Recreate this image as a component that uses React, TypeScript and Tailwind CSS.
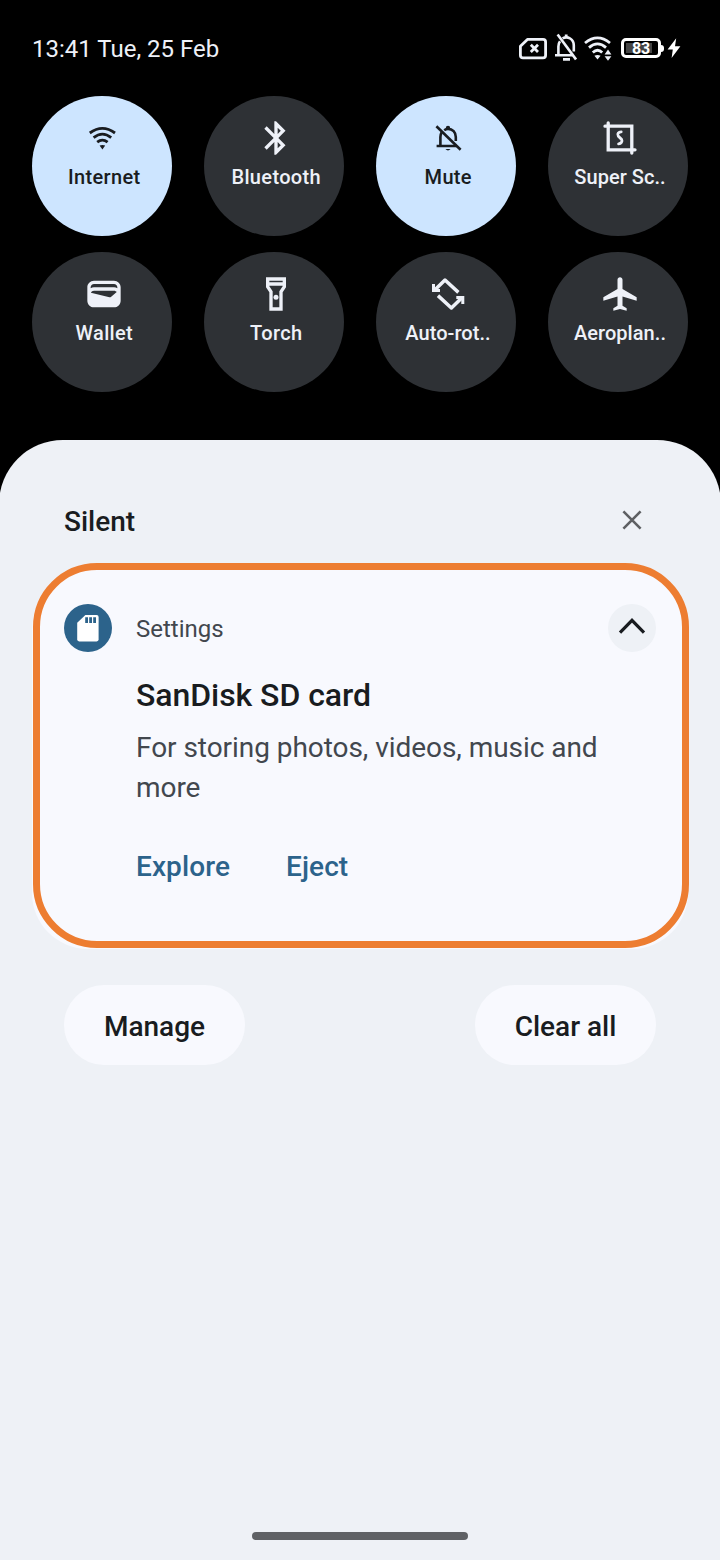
import type { ReactNode } from 'react';
import clsx from 'clsx';

const Glyph = ({ children }: { children: ReactNode }) => (
    <svg width="40" height="40" viewBox="0 0 24 24" fill="currentColor">
        {children}
    </svg>
);

const WifiIcon = () => (
    <svg width="40" height="40" viewBox="0 0 40 40" fill="none" stroke="currentColor" strokeWidth="2.8">
        <path d="M5.8 15Q18.4 5.8 31 15" />
        <path d="M9.6 19.6Q18.4 12.6 27.2 19.6" />
        <path d="M13.2 24.2Q18.4 20 23.6 24.2" />
        <path d="M15.6 27.6Q18.4 26.2 21.2 27.6L18.4 31.4Z" fill="currentColor" stroke="none" />
    </svg>
);

const MuteIcon = () => (
    <svg width="40" height="40" viewBox="0 0 40 40" fill="none" stroke="currentColor" strokeWidth="2.6">
        <path d="M8.4 8.2L32.6 31.8" />
        <path d="M12.4 28V19Q12.4 16.6 13.6 14.4M8.6 28H28.8" />
        <path d="M16.2 12.2Q18 10.9 20 10.9C24.6 10.9 27.8 14.4 27.8 19V23" />
        <path d="M17.8 10A2.2 2.2 0 0 1 22.2 10ZM17.4 31H22.6Q20 33.8 17.4 31Z" fill="currentColor" stroke="none" />
    </svg>
);

const ScreenshotIcon = () => (
    <svg width="40" height="40" viewBox="0 0 40 40" fill="none" stroke="currentColor" strokeWidth="3.3" strokeLinecap="round">
        <path d="M8.2 5V31.8H35M5 8.2H31.8V35" />
        <path d="M21.2 13.8C18.6 14 16.8 16 18.2 18L21.6 21.4C22.8 23.6 21 25.6 18.6 25.8" strokeWidth="2.8" />
    </svg>
);

const RotateIcon = () => (
    <svg width="40" height="40" viewBox="0 0 40 40" fill="none" stroke="currentColor" strokeWidth="3.5">
        <path d="M30.4 18.4L17 6L7 15.8M10 21.6L23.4 34L33.4 24.2" strokeLinejoin="round" />
        <path d="M4 10H7V15H12V18H4ZM36.3 30H33.3V25H28.3V22H36.3Z" fill="currentColor" stroke="none" />
    </svg>
);

const tiles: { label: string; active?: boolean; icon: ReactNode }[] = [
    { label: 'Internet', active: true, icon: <WifiIcon /> },
    {
        label: 'Bluetooth',
        icon: (
            <Glyph>
                <path d="M17.71 7.71L12 2h-1v7.59L6.41 5 5 6.41 10.59 12 5 17.59 6.41 19 11 14.41V22h1l5.71-5.71-4.3-4.29 4.3-4.29zM13 5.83l1.88 1.88L13 9.59V5.83zm1.88 10.46L13 18.17v-3.76l1.88 1.88z" />
            </Glyph>
        ),
    },
    { label: 'Mute', active: true, icon: <MuteIcon /> },
    { label: 'Super Sc..', icon: <ScreenshotIcon /> },
    {
        label: 'Wallet',
        icon: (
            <Glyph>
                <path d="M18 4H6C3.79 4 2 5.79 2 8v8c0 2.21 1.79 4 4 4h12c2.21 0 4-1.79 4-4V8c0-2.21-1.79-4-4-4zm-1.86 9.77c-.24.2-.57.28-.88.2L4.15 11.25C4.45 10.52 5.16 10 6 10h12c.67 0 1.26.34 1.63.84l-3.49 2.93zM6 6h12c1.1 0 2 .9 2 2v.55c-.59-.34-1.27-.55-2-.55H6c-.73 0-1.41.21-2 .55V8c0-1.1.9-2 2-2z" />
            </Glyph>
        ),
    },
    {
        label: 'Torch',
        icon: (
            <Glyph>
                <path d="M6 2v6l2 3v11h8V11l2-3V2H6zm10 2v1H8V4h8zm-2 6.4V20h-4v-9.61l-2-3V7h8v.39l-2 3.01z" />
                <circle cx="12" cy="14" r="1.5" />
            </Glyph>
        ),
    },
    { label: 'Auto-rot..', icon: <RotateIcon /> },
    {
        label: 'Aeroplan..',
        icon: (
            <Glyph>
                <path d="M22 16v-2l-8.5-5V3.5c0-.83-.67-1.5-1.5-1.5s-1.5.67-1.5 1.5V9L2 14v2l8.5-2.5V19L8 20.5V22l4-1 4 1v-1.5L13.5 19v-5.5L22 16z" />
            </Glyph>
        ),
    },
];

const StatusBar = () => (
    <div className="flex h-24 items-center justify-between pl-8 pr-[39px] text-[#eef1f8]">
        <span className="pt-0.5 text-2xl leading-8">13:41 Tue, 25 Feb</span>
        <div className="flex h-8 items-center">
            {/* No SIM */}
            <svg className="mr-2" width="28" height="32" viewBox="0 0 28 32" fill="none" stroke="currentColor" strokeWidth="2.8">
                <path d="M8.4 7.4H24Q26.6 7.4 26.6 10V23.2Q26.6 25.8 24 25.8H4Q1.4 25.8 1.4 23.2V14.2Z" strokeLinejoin="round" />
                <path d="M11.8 12.8L19 20M19 12.8L11.8 20" />
            </svg>
            {/* Ringer off */}
            <svg className="mr-[7px]" width="22" height="32" viewBox="0 0 22 32" fill="none" stroke="currentColor" strokeWidth="2.6">
                <path d="M2.6 2.6L21 27.4" />
                <path d="M3.4 22.8V14.4Q3.4 11.4 5 9.2M0 23.2H17.6" />
                <path d="M7.6 6.4C12.8 3.4 18.8 7.4 18.8 13.4V19.4" />
                <path d="M11.2 2.6V6M8 27.4H15" strokeWidth="2.8" />
            </svg>
            {/* Wi-Fi with traffic arrows */}
            <svg className="mr-[9px]" width="28" height="32" viewBox="0 0 28 32" fill="none" stroke="currentColor" strokeWidth="2.8">
                <path d="M1 11Q13.5 0.8 26 11" />
                <path d="M5 15.6Q13.5 8.2 22 15.6" />
                <path d="M8.8 20.4Q13.5 16 18.2 20.4" />
                <path d="M10.4 23.8Q13.5 22.2 16.6 23.8L13.5 27.4ZM20.6 22.4L24 17.4L27.4 22.4ZM20.6 24.2L24 28.8L27.4 24.2Z" fill="currentColor" stroke="none" />
            </svg>
            <div className="flex h-5 w-10 rounded-[5px] border-[3px] border-white p-[2px]">
                <div className="relative flex h-full w-[26px] items-center bg-[#444]">
                    <span className="absolute left-1.5 pt-0.5 text-[16px] font-bold leading-none tracking-[-0.3px] text-white">83</span>
                </div>
            </div>
            <div className="h-[7px] w-[3px] rounded-r-sm bg-white" />
            <svg className="ml-[3px]" width="14" height="32" viewBox="0 0 14 32" fill="#fff">
                <path d="M9.2 6.2L0.6 17.6H5.8L4.6 26L13.4 14.2H8Z" />
            </svg>
        </div>
    </div>
);

const QuickSettings = () => (
    <div className="grid grid-cols-4 gap-x-8 gap-y-4 px-8">
        {tiles.map((tile) => (
            <button
                key={tile.label}
                className={clsx(
                    'flex h-[140px] w-[140px] flex-col items-center rounded-full pl-1 pt-[22px]',
                    tile.active ? 'bg-[#cde5ff] text-[#191c20]' : 'bg-[#2e3135] text-[#eef1f8]'
                )}
            >
                {tile.icon}
                <span
                    className={clsx(
                        'mt-[7px] whitespace-nowrap text-xl font-medium leading-6',
                        tile.label.endsWith('..') ? 'tracking-[0.05px]' : 'pl-[0.5px] tracking-[0.35px]'
                    )}
                >
                    {tile.label}
                </span>
            </button>
        ))}
    </div>
);

const SdCardNotification = () => (
    <div className="relative mx-8 h-[385px] rounded-b-[56px] rounded-t-[66px] bg-[#f8f9fe] px-8 pt-10">
        <div className="flex h-12 items-center">
            <div className="flex h-12 w-12 items-center justify-center rounded-full bg-[#2c638b]">
                <svg width="24" height="28" viewBox="0 0 24 28">
                    <path d="M9.4 1H20.6Q22.6 1 22.6 3V25.6Q22.6 27.4 20.6 27.4H3.2Q1.2 27.4 1.2 25.6V8.8Z" fill="#fff" />
                    <path d="M9.2 3.2H12V9H9.2ZM13.2 3.2H16V9H13.2ZM17.2 3.2H20V9H17.2Z" fill="#2c638b" />
                </svg>
            </div>
            <span className="ml-6 pt-0.5 text-2xl text-[#42474e]">Settings</span>
            <button className="ml-auto flex h-12 w-12 items-center justify-center rounded-full bg-[#eef1f6]">
                <svg width="28" height="28" viewBox="0 0 28 28" fill="none" stroke="#191c20" strokeWidth="3.2">
                    <path d="M2 18.6L14 6.4L26 18.6" />
                </svg>
            </button>
        </div>
        <div className="pl-[72px]">
            <h2 className="mt-6 text-[32px] font-medium leading-[38px] tracking-[-0.06px] text-[#191c20]">SanDisk SD card</h2>
            <p className="mt-[14px] text-[28px] leading-10 tracking-[-0.05px] text-[#42474e]">
                For storing photos, videos, music and
                <br />
                more
            </p>
            <div className="mt-[39px] flex gap-14 text-[28px] font-medium leading-10 tracking-[0.1px] text-[#2c638b]">
                <button>Explore</button>
                <button>Eject</button>
            </div>
        </div>
        {/* Highlight frame */}
        <div className="pointer-events-none absolute -right-px bottom-px left-[0.5px] -top-[0.7px] rounded-[64px] border-[7px] border-[#ed7d31]" />
    </div>
);

const App = () => {
    return (
        <div className="flex h-[1560px] w-[720px] flex-col overflow-hidden bg-black font-['Roboto',sans-serif]">
            <StatusBar />
            <QuickSettings />
            {/* Sheet runs slightly past both screen edges */}
            <div className="-mx-px mt-12 flex flex-1 flex-col rounded-t-[64px] bg-[#eef1f6] px-px">
                <div className="flex h-[124px] items-center justify-between pl-16 pr-[76px] pt-9">
                    <span className="pt-[3px] text-[28px] font-medium text-[#191c20]">Silent</span>
                    <button>
                        <svg width="24" height="24" viewBox="0 0 24 24" fill="none" stroke="#5e6063" strokeWidth="2.6">
                            <path d="M3.4 3.4L20.6 20.6M20.6 3.4L3.4 20.6" />
                        </svg>
                    </button>
                </div>
                <SdCardNotification />
                <div className="mt-9 flex justify-between px-16 text-[28px] font-medium text-[#191c20]">
                    <button className="h-20 w-[181px] rounded-full bg-[#f8f9fe] pt-1">Manage</button>
                    <button className="h-20 w-[181px] rounded-full bg-[#f8f9fe] pt-1">Clear all</button>
                </div>
                <div className="mb-5 mt-auto h-2 w-[216px] self-center rounded-full bg-[#5f6165]" />
            </div>
        </div>
    );
};

export default App;
